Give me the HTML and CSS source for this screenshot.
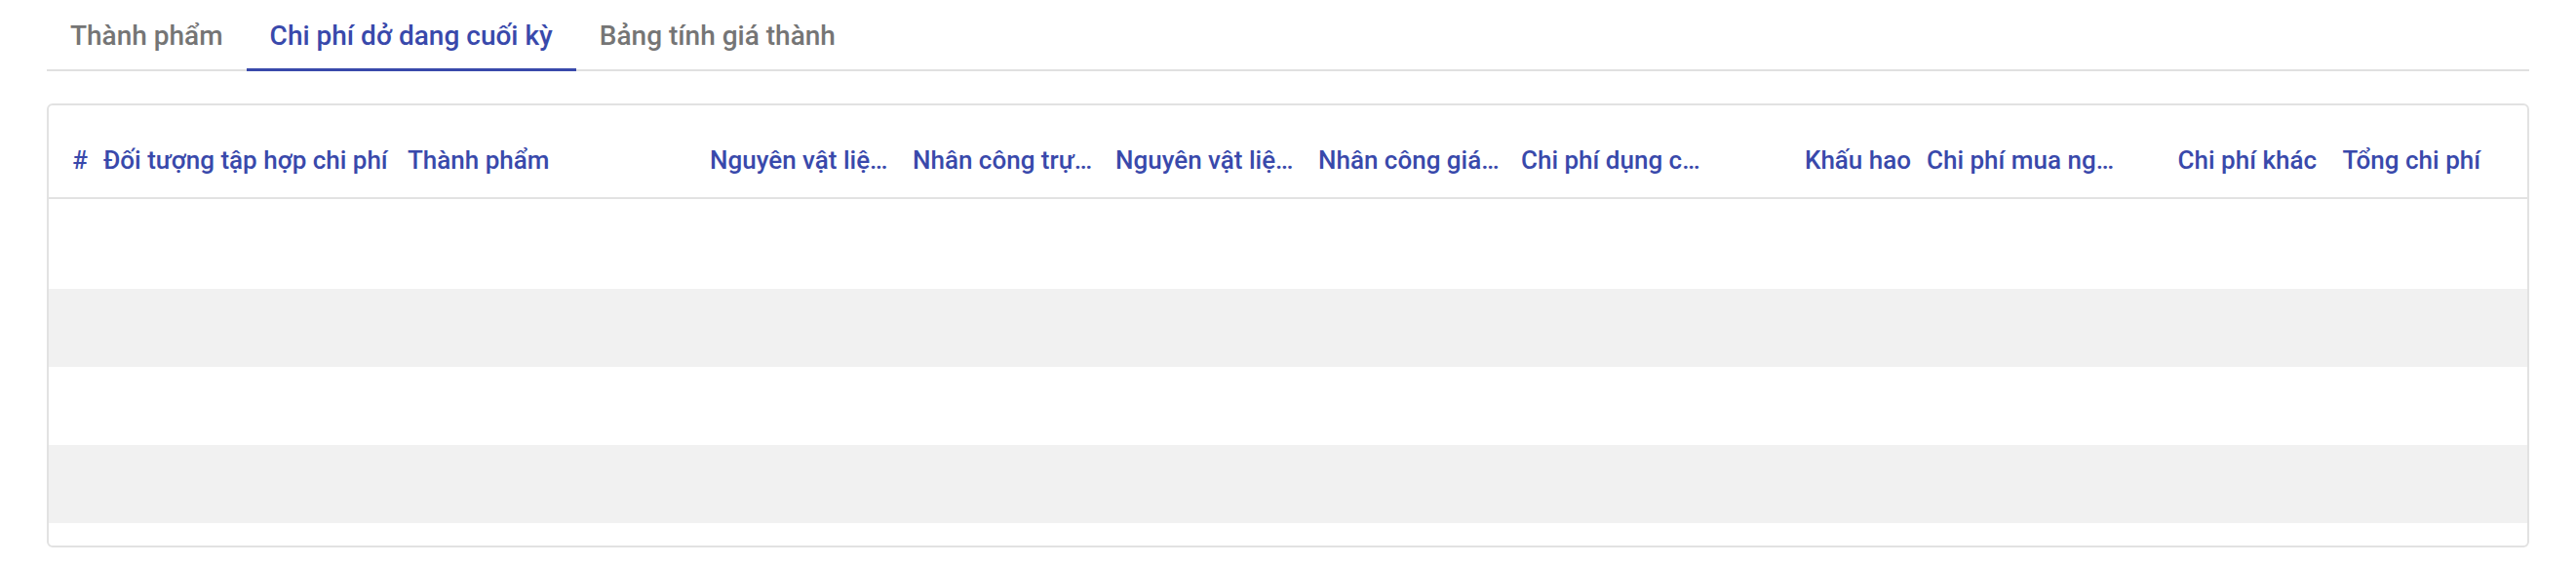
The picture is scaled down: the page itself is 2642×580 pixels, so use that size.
FILE: index.html
```html
<!DOCTYPE html>
<html lang="vi">
<head>
<meta charset="utf-8">
<title>Chi phí dở dang cuối kỳ</title>
<link rel="stylesheet" href="styles.css">
</head>
<body>
<div class="page">
  <div class="tabs">
    <div class="tab">Thành phẩm</div>
    <div class="tab active">Chi phí dở dang cuối kỳ</div>
    <div class="tab">Bảng tính giá thành</div>
  </div>
  <div class="card">
    <div class="grid head">
      <div class="cell right">#</div>
      <div class="cell">Đối tượng tập hợp chi phí</div>
      <div class="cell">Thành phẩm</div>
      <div class="cell right">Nguyên vật liệu trực tiếp</div>
      <div class="cell right">Nhân công trực tiếp</div>
      <div class="cell right">Nguyên vật liệu gián tiếp</div>
      <div class="cell right">Nhân công gián tiếp</div>
      <div class="cell right">Chi phí dụng cụ sản xuất</div>
      <div class="cell right">Khấu hao</div>
      <div class="cell right">Chi phí mua ngoài</div>
      <div class="cell right">Chi phí khác</div>
      <div class="cell right last">Tổng chi phí</div>
    </div>
    <div class="body">
      <div class="row"></div>
      <div class="row alt"></div>
      <div class="row"></div>
      <div class="row alt"></div>
    </div>
  </div>
</div>
</body>
</html>
```
FILE: styles.css
```css
html, body {
  margin: 0;
  padding: 0;
  background: #ffffff;
}
body {
  font-family: Roboto, "Noto Sans", "Liberation Sans", sans-serif;
}
.page {
  padding: 0 48px;
}
.tabs {
  display: flex;
  padding-top: 22px;
  border-bottom: 2px solid #e0e0e0;
}
.tab {
  position: relative;
  padding: 0 24px 19px;
  font-size: 28px;
  line-height: 30px;
  font-weight: 500;
  color: #757575;
  white-space: nowrap;
}
.tab.active {
  color: #3949ab;
}
.tab.active::after {
  content: "";
  position: absolute;
  left: 0;
  right: 0;
  bottom: -2px;
  height: 3px;
  background: #3949ab;
}
.card {
  margin-top: 33px;
  border: 2px solid #e2e2e2;
  border-radius: 6px;
  overflow: hidden;
}
.grid {
  display: grid;
  grid-template-columns: 48px 312px 310px repeat(5, 208px) 208px 212px 204px 1fr;
}
.head {
  border-bottom: 2px solid #e2e2e2;
}
.cell {
  padding: 41px 8px 23px;
  font-size: 26px;
  line-height: 30px;
  font-weight: 500;
  color: #3949ab;
  white-space: nowrap;
  overflow: hidden;
  text-overflow: ellipsis;
  min-width: 0;
}
.cell.right {
  text-align: right;
}
.cell.last {
  padding-right: 48px;
}
.body {
  padding: 12px 0 23px;
}
.row {
  height: 80px;
}
.row.alt {
  background: #f1f1f1;
}
```
